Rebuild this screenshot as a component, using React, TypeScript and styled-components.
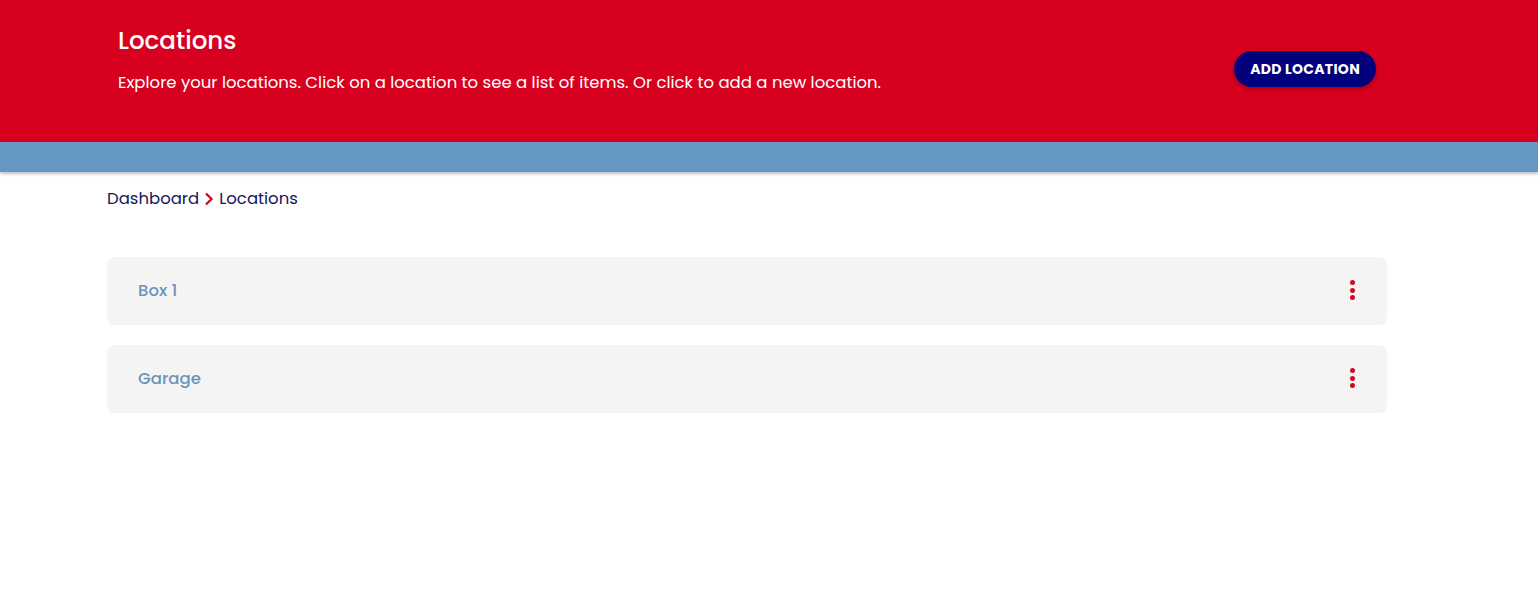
import { createGlobalStyle, styled } from "styled-components";

const GlobalStyle = createGlobalStyle`
  body {
    margin: 0;
    background: #ffffff;
    font-family: Poppins, Inter, "Noto Sans", "Liberation Sans", sans-serif;
  }
`;

const locations = ["Box 1", "Garage"];

const App = (): JSX.Element => {
  return (
    <>
      <GlobalStyle />
      <Hero>
        <HeroText>
          <Title>Locations</Title>
          <Subtitle>
            Explore your locations. Click on a location to see a list of items.
            Or click to add a new location.
          </Subtitle>
        </HeroText>
        <AddButton>Add Location</AddButton>
      </Hero>
      <Band />
      <Main>
        <Crumbs>
          <span>Dashboard</span>
          <svg width="12" height="14" viewBox="0 0 12 14">
            <path
              d="M3 1.5 L8.5 7 L3 12.5"
              fill="none"
              stroke="#d7001f"
              strokeWidth="2.2"
            />
          </svg>
          <span>Locations</span>
        </Crumbs>
        <List>
          {locations.map((name) => (
            <Card key={name}>
              <CardName>{name}</CardName>
              <Kebab aria-label="more">
                <i />
                <i />
                <i />
              </Kebab>
            </Card>
          ))}
        </List>
      </Main>
    </>
  );
};

export default App;

// red hero header
const Hero = styled.header`
  height: 142px;
  background: #d7001f;
  box-sizing: border-box;
  padding: 25px 162px 0 118px;
  display: flex;
  align-items: flex-start;
  justify-content: space-between;
  color: #ffffff;
`;

const HeroText = styled.div`
  display: flex;
  flex-direction: column;
  gap: 14px;
`;

const Title = styled.h1`
  margin: 0;
  font-size: 24.6px;
  font-weight: 500;
  line-height: 32px;
`;

const Subtitle = styled.p`
  margin: 0;
  font-size: 16.5px;
  line-height: 24px;
  font-weight: 400;
`;

const AddButton = styled.button`
  height: 36px;
  margin-top: 26px;
  padding: 0 16px;
  border: none;
  border-radius: 18px;
  background: #01017e;
  color: #ffffff;
  font-family: inherit;
  font-size: 14px;
  font-weight: 700;
  letter-spacing: 0.3px;
  text-transform: uppercase;
  box-shadow: 0 2px 4px rgba(0, 0, 0, 0.25);
  cursor: pointer;
`;

const Band = styled.div`
  height: 30px;
  background: #6497c1;
  box-shadow: 0 2px 3px rgba(0, 0, 0, 0.25);
`;

const Main = styled.main`
  padding: 0 0 0 107px;
`;

const Crumbs = styled.nav`
  display: flex;
  align-items: center;
  gap: 4px;
  padding-top: 15px;
  height: 22px;
  font-size: 16.5px;
  color: #14195a;

  svg {
    margin-top: 1px;
  }
`;

const List = styled.div`
  width: 1280px;
  margin-top: 48px;
  display: flex;
  flex-direction: column;
  gap: 20px;
`;

const Card = styled.div`
  height: 68px;
  box-sizing: border-box;
  padding: 0 28px 0 31px;
  background: #f4f4f4;
  border-radius: 8px;
  display: flex;
  align-items: center;
  justify-content: space-between;
`;

const CardName = styled.span`
  font-size: 16.5px;
  font-weight: 500;
  line-height: 22px;
  color: #6a95bb;
`;

const Kebab = styled.button`
  border: none;
  background: none;
  padding: 0 4px;
  margin-top: -2px;
  display: flex;
  flex-direction: column;
  gap: 2.5px;
  cursor: pointer;

  i {
    width: 5px;
    height: 5px;
    border-radius: 50%;
    background: #d10a24;
  }
`;
